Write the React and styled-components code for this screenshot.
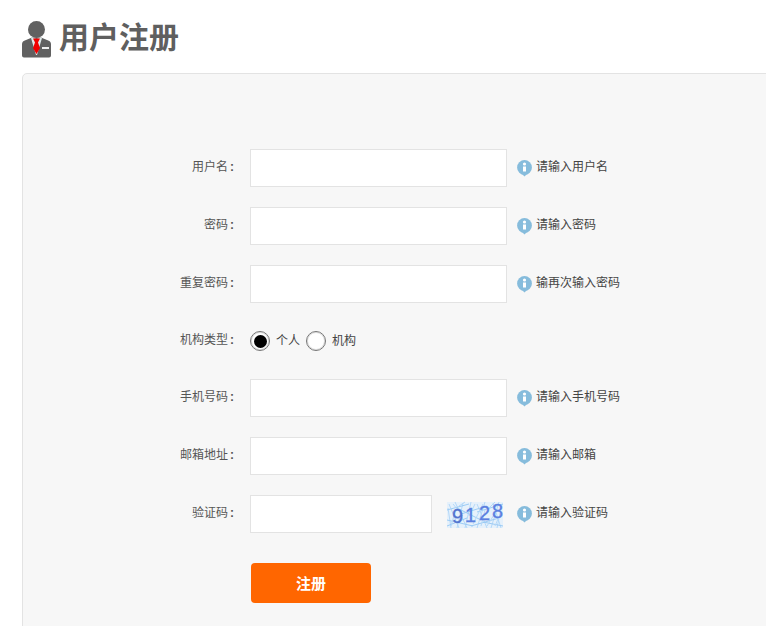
import React from "react";
import styled, { createGlobalStyle } from "styled-components";

const GlobalStyle = createGlobalStyle`
  html, body {
    margin: 0;
    padding: 0;
    height: 626px;
    overflow: hidden;
    background: #fff;
    font-family: "Liberation Sans", "Noto Sans CJK SC", sans-serif;
  }
`;

const Page = styled.div`
  width: 766px;
  height: 626px;
  overflow: hidden;
  padding: 20px 0 0 22px;
  box-sizing: border-box;
`;

const Header = styled.div`
  display: flex;
  align-items: center;
  gap: 8px;
  height: 38px;
  margin-bottom: 15px;
`;

const Title = styled.h1`
  margin: 0;
  padding-bottom: 2px;
  font-size: 30px;
  line-height: 36px;
  font-weight: bold;
  color: #5f5f5f;
`;

const Panel = styled.div`
  width: 800px;
  height: 640px;
  box-sizing: border-box;
  background: #f7f7f7;
  border: 1px solid #e3e3e3;
  border-radius: 5px;
  padding-top: 75px;
`;

const Row = styled.div`
  display: flex;
  align-items: center;
  height: ${(props) => props.$height || 38}px;
  margin-bottom: 20px;
`;

const Label = styled.label`
  width: 211px;
  margin-right: 16px;
  padding-bottom: 2px;
  text-align: right;
  font-size: 12px;
  line-height: 16px;
  color: #555;
  flex-shrink: 0;
`;

const Colon = styled.span`
  display: inline-block;
  width: 6px;
  text-align: right;
  font-weight: bold;
`;

const Input = styled.input`
  width: ${(props) => props.$width || 257}px;
  height: 38px;
  box-sizing: border-box;
  background: #fff;
  border: 1px solid #e3e3e3;
  outline: none;
  padding: 0 8px;
  margin: 0;
`;

const Hint = styled.span`
  display: flex;
  align-items: center;
  gap: 4px;
  margin-left: ${(props) => props.$offset ?? 10}px;
  font-size: 12px;
  line-height: 16px;
  color: #444;
`;

const HintText = styled.span`
  padding-bottom: 2px;
`;

const RadioGroup = styled.div`
  display: flex;
  align-items: center;
  font-size: 12px;
  line-height: 16px;
  color: #444;
`;

const RadioMark = styled.span`
  width: 20px;
  height: 20px;
  box-sizing: border-box;
  border: 1px solid #767676;
  box-shadow: inset 0 0 0 1px rgba(150, 150, 150, 0.35);
  border-radius: 50%;
  background: #fff;
  display: flex;
  align-items: center;
  justify-content: center;
  margin-right: 6px;
  &::after {
    content: "";
    display: ${(props) => (props.$checked ? "block" : "none")};
    width: 13px;
    height: 13px;
    border-radius: 50%;
    background: #000;
  }
`;

const RadioText = styled.span`
  margin-right: 6px;
  padding-bottom: 1px;
`;

const Captcha = styled.svg`
  margin-left: 15px;
  flex-shrink: 0;
  display: block;
`;

const SubmitRow = styled.div`
  padding: 10px 0 0 228px;
`;

const SubmitButton = styled.button`
  width: 120px;
  height: 40px;
  border: none;
  border-radius: 4px;
  background: #ff6600;
  color: #fff;
  font-family: inherit;
  font-size: 15px;
  font-weight: bold;
  padding: 0 0 2px;
`;

const UserIcon = () => (
  <svg width="29" height="37" viewBox="0 0 29 37">
    <circle cx="14.5" cy="8.5" r="8.5" fill="#616161" />
    <path d="M0 23 Q0 20 4 19 L10 16.5 L19 16.5 L25 19 Q29 20 29 23 L29 34.5 Q29 36.5 27 36.5 L2 36.5 Q0 36.5 0 34.5 Z" fill="#616161" />
    <path d="M9 17 L10.5 16.5 L14.5 18 L18.5 16.5 L20 17 L15 34 L14 34 Z" fill="#dfe9e9" />
    <path d="M11 17.5 L18 17.5 L16 21.5 L18 27 L14.5 33 L11 27 L13 21.5 Z" fill="#f00000" />
    <rect x="20" y="26" width="7" height="2" fill="#f0f0f0" />
  </svg>
);

const InfoIcon = () => (
  <svg width="15" height="18" viewBox="0 0 15 18">
    <circle cx="7.5" cy="8.4" r="7.4" fill="#86bcdc" />
    <path d="M5 15 L7.5 17.5 L10 15 Z" fill="#86bcdc" />
    <circle cx="7.5" cy="5" r="1.6" fill="#fff" />
    <rect x="6" y="7.5" width="3" height="5" fill="#fff" />
  </svg>
);

const noise = [
  "M2 6 L12 30 M8 4 L20 30 M16 5 L10 30 M24 4 L18 30 M30 6 L40 30 M38 4 L30 30 M46 5 L54 30 M52 4 L44 30 M4 30 L1 10 M55 6 L50 30",
  "M0 12 L22 6 M0 22 L26 28 M14 16 L40 8 M24 28 L52 20 M30 14 L56 6 M36 24 L56 28 M0 28 L20 20 M10 10 L34 22",
  "M4 28 L8 14 M12 8 L18 4 M22 18 L28 6 M34 28 L38 12 M42 10 L48 4 M48 28 L54 14 M6 6 L16 18 M26 26 L36 6 M40 28 L50 12",
];

const CaptchaImage = () => (
  <Captcha width="57" height="32" viewBox="0 0 57 32">
    <rect x="0" y="4" width="56" height="26" fill="#e6f1fb" />
    {noise.map((d, i) => (
      <path key={i} d={d} stroke={i === 1 ? "#9ccbf4" : "#b4d8f8"} strokeWidth="1" fill="none" />
    ))}
    <g fontFamily="'Liberation Sans', sans-serif" fontSize="20" fill="#5b7fe0" stroke="#5b7fe0" strokeWidth="0.3">
      <text x="5" y="25" fill="#5273cf" stroke="#5273cf">9</text>
      <text x="18" y="24">1</text>
      <text x="32" y="22">2</text>
      <text x="45" y="20">8</text>
    </g>
  </Captcha>
);

const fields = [
  { label: "用户名", hint: "请输入用户名" },
  { label: "密码", hint: "请输入密码", type: "password" },
  { label: "重复密码", hint: "输再次输入密码", type: "password" },
  { kind: "radio", label: "机构类型" },
  { label: "手机号码", hint: "请输入手机号码" },
  { label: "邮箱地址", hint: "请输入邮箱" },
  { kind: "captcha", label: "验证码", hint: "请输入验证码" },
];

const FieldLabel = ({ text }) => (
  <Label>
    {text}
    <Colon>:</Colon>
  </Label>
);

const FieldHint = ({ text, offset }) => (
  <Hint $offset={offset}>
    <InfoIcon />
    <HintText>{text}</HintText>
  </Hint>
);

export default function App() {
  return (
    <Page>
      <GlobalStyle />
      <Header>
        <UserIcon />
        <Title>用户注册</Title>
      </Header>
      <Panel>
        {fields.map((field) => {
          if (field.kind === "radio") {
            return (
              <Row key={field.label} $height={36}>
                <FieldLabel text={field.label} />
                <RadioGroup>
                  <RadioMark $checked />
                  <RadioText>个人</RadioText>
                  <RadioMark />
                  <RadioText>机构</RadioText>
                </RadioGroup>
              </Row>
            );
          }
          if (field.kind === "captcha") {
            return (
              <Row key={field.label}>
                <FieldLabel text={field.label} />
                <Input $width={182} />
                <CaptchaImage />
                <FieldHint text={field.hint} offset={13} />
              </Row>
            );
          }
          return (
            <Row key={field.label}>
              <FieldLabel text={field.label} />
              <Input type={field.type || "text"} />
              <FieldHint text={field.hint} />
            </Row>
          );
        })}
        <SubmitRow>
          <SubmitButton>注册</SubmitButton>
        </SubmitRow>
      </Panel>
    </Page>
  );
}
